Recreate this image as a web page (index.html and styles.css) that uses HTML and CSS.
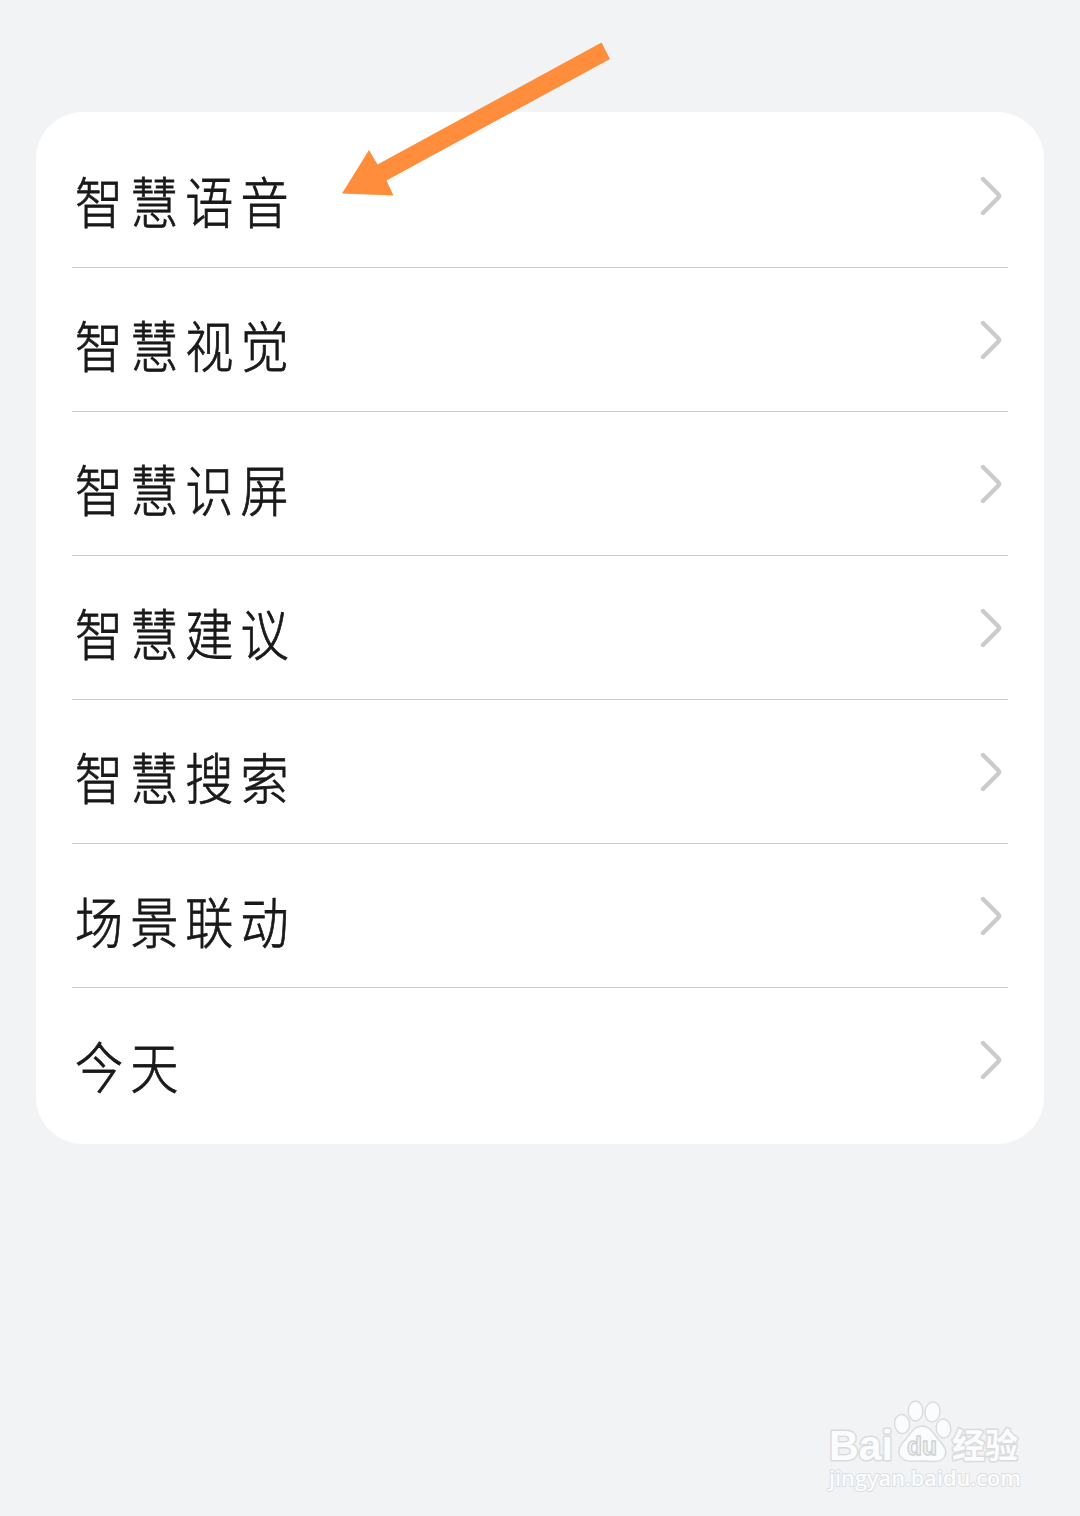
FILE: index.html
```html
<!DOCTYPE html>
<html lang="zh-CN">
<head>
	<meta charset="UTF-8">
	<meta name="viewport" content="width=device-width, initial-scale=1.0">
	<title>智慧助手</title>
	<link rel="stylesheet" href="styles.css">
</head>
<body>

	<ul class="menu">
		<li class="menu__item">
			<span class="menu__label">智慧语音</span>
			<svg class="menu__arrow" viewBox="0 0 24 42"><path d="M4 4 19.200 19.200Q21 21 19.200 22.800L4 38"/></svg>
		</li>
		<li class="menu__item">
			<span class="menu__label">智慧视觉</span>
			<svg class="menu__arrow" viewBox="0 0 24 42"><path d="M4 4 19.200 19.200Q21 21 19.200 22.800L4 38"/></svg>
		</li>
		<li class="menu__item">
			<span class="menu__label">智慧识屏</span>
			<svg class="menu__arrow" viewBox="0 0 24 42"><path d="M4 4 19.200 19.200Q21 21 19.200 22.800L4 38"/></svg>
		</li>
		<li class="menu__item">
			<span class="menu__label">智慧建议</span>
			<svg class="menu__arrow" viewBox="0 0 24 42"><path d="M4 4 19.200 19.200Q21 21 19.200 22.800L4 38"/></svg>
		</li>
		<li class="menu__item">
			<span class="menu__label">智慧搜索</span>
			<svg class="menu__arrow" viewBox="0 0 24 42"><path d="M4 4 19.200 19.200Q21 21 19.200 22.800L4 38"/></svg>
		</li>
		<li class="menu__item">
			<span class="menu__label">场景联动</span>
			<svg class="menu__arrow" viewBox="0 0 24 42"><path d="M4 4 19.200 19.200Q21 21 19.200 22.800L4 38"/></svg>
		</li>
		<li class="menu__item">
			<span class="menu__label">今天</span>
			<svg class="menu__arrow" viewBox="0 0 24 42"><path d="M4 4 19.200 19.200Q21 21 19.200 22.800L4 38"/></svg>
		</li>
	</ul>

	<!-- pointer to the first item -->
	<svg class="pointer" viewBox="0 0 290 180">
		<path d="M271.500 12.500 280 29 56.500 150.500 63.500 165.500 12 163.500 39 120 47.500 134.500Z"/>
	</svg>

	<svg class="watermark" viewBox="0 0 210 110">
		<g class="watermark__brand">
			<text x="9" y="70" font-size="43" textLength="64" lengthAdjust="spacingAndGlyphs">Bai</text>
			<text class="watermark__cjk" x="132" y="68" font-size="34" textLength="66" lengthAdjust="spacingAndGlyphs">经验</text>
		</g>
		<g class="watermark__paw">
			<ellipse cx="82" cy="34" rx="7.500" ry="9.500" transform="rotate(-8 82 34)"/>
			<ellipse cx="95.500" cy="21" rx="7.300" ry="10"/>
			<ellipse cx="112.500" cy="22" rx="7.500" ry="10" transform="rotate(8 112.500 22)"/>
			<ellipse cx="123.500" cy="38.500" rx="7.300" ry="9.500" transform="rotate(-8 123.500 38.500)"/>
			<path d="M102 36C94 36 91 43 86 49C80 55 77 61 80 66C84 73 93 71 102 71C111 71 121 74 125 66C128 60 123 54 118 49C113 43 110 36 102 36Z"/>
		</g>
		<text class="watermark__du" x="87" y="65" font-size="26" textLength="30" lengthAdjust="spacingAndGlyphs">du</text>
		<text class="watermark__url" x="9" y="96" font-size="21" textLength="192" lengthAdjust="spacingAndGlyphs">jingyan.baidu.com</text>
	</svg>

</body>
</html>
```
FILE: styles.css
```css
* {
    margin: 0;
    padding: 0;
    box-sizing: border-box;
}

body {
    position: relative;
    height: 1516px;
    padding: 112px 36px 0;
    overflow: hidden;
    background: #f1f3f5;
    font-family: "Noto Sans CJK SC", sans-serif;
}

.menu {
    height: 1032px;
    padding: 12px 36px;
    list-style: none;
    background: #fff;
    border-radius: 47px;
}

.menu__item {
    display: flex;
    justify-content: space-between;
    align-items: center;
    height: 144px;
    padding: 0 5px 0 3px;
    border-bottom: 1px solid #cacbcc;
}

.menu__item:last-child {
    border-bottom: none;
}

.menu__label {
    padding-top: 7px;
    font-size: 55px;
    font-weight: 300;
    line-height: 72px;
    letter-spacing: 8px;
    color: #191919;
    white-space: nowrap;
    -webkit-text-stroke: 0.8px #191919;
    transform: scaleX(0.875);
    transform-origin: left center;
}

.menu__arrow {
    width: 24px;
    height: 42px;
    fill: none;
    stroke: #cbcbcb;
    stroke-width: 4.4;
    stroke-linecap: round;
    stroke-linejoin: round;
}

.pointer {
    position: absolute;
    left: 330px;
    top: 30px;
    width: 290px;
    height: 180px;
    fill: #ff8d3b;
}

.watermark {
    position: absolute;
    left: 820px;
    top: 1390px;
    width: 210px;
    height: 110px;
    fill: #fbfcfd;
    stroke: #d9dbdd;
    stroke-width: 1.4;
    stroke-linejoin: round;
}

.watermark__brand {
    font-family: "Liberation Sans", sans-serif;
    font-weight: bold;
    stroke-width: 3;
    paint-order: stroke;
}

.watermark__cjk {
    font-family: "Noto Sans CJK SC", sans-serif;
}

.watermark__du {
    font-family: "Liberation Sans", sans-serif;
    font-weight: bold;
    fill: #f1f3f5;
    stroke: #cfd1d3;
}

.watermark__url {
    font-family: "Open Sans", sans-serif;
    font-weight: 600;
    stroke-width: 1.8;
    stroke: #dcdee0;
    paint-order: stroke;
}
```
